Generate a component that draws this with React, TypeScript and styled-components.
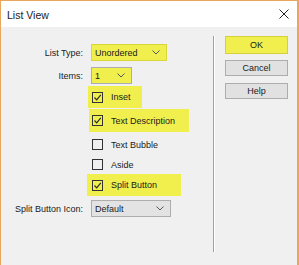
import React from 'react'
import styled, {createGlobalStyle} from 'styled-components'

const HIGHLIGHT = '#f1ef4d'

const GlobalStyle = createGlobalStyle`
  html, body {
    margin: 0;
    padding: 0;
    background: #f0f0f0;
  }
  body {
    font-family: "Liberation Sans", Arial, sans-serif;
  }
`

export default function App() {
  return (
    <>
      <GlobalStyle />
      <Window>
        <TitleBar>
          <Title>List View</Title>
          <CloseIcon />
        </TitleBar>
        <Body>
          <Form>
            <Row $mt={17}>
              <Label>List Type:</Label>
              <Select $w={76} $highlight>
                Unordered
                <Chevron />
              </Select>
            </Row>
            <Row $mt={6}>
              <Label>Items:</Label>
              <Select $w={41} $fill={HIGHLIGHT}>
                1
                <Chevron />
              </Select>
            </Row>
            <Row $mt={2}>
              <span />
              <CheckRow $h={22} $w={54} $highlight $shift={3}>
                <Box checked />
                Inset
              </CheckRow>
            </Row>
            <Row $mt={1}>
              <span />
              <CheckRow $h={23} $w={100} $highlight $shift={2}>
                <Box checked />
                Text Description
              </CheckRow>
            </Row>
            <Row $mt={3}>
              <span />
              <CheckRow $h={19}>
                <Box />
                Text Bubble
              </CheckRow>
            </Row>
            <Row $mt={1}>
              <span />
              <CheckRow $h={19}>
                <Box />
                Aside
              </CheckRow>
            </Row>
            <Row $mt={0}>
              <span />
              <CheckRow $h={22} $w={94} $highlight $shift={4}>
                <Box checked />
                Split Button
              </CheckRow>
            </Row>
            <Row $mt={4}>
              <Label>Split Button Icon:</Label>
              <Select $w={80}>
                Default
                <Chevron />
              </Select>
            </Row>
          </Form>
          <Separator />
          <Buttons>
            <Button $primary>OK</Button>
            <Button>Cancel</Button>
            <Button>Help</Button>
          </Buttons>
        </Body>
      </Window>
    </>
  )
}

function CloseIcon() {
  return (
    <CloseWrap>
      <svg width={10} height={10} viewBox="0 0 10 10">
        <path d="M0.5 0.5L9.5 9.5M9.5 0.5L0.5 9.5" stroke="#222" strokeWidth={1} />
      </svg>
    </CloseWrap>
  )
}

function Chevron() {
  return (
    <ChevronWrap>
      <svg width={8} height={5} viewBox="0 0 8 5">
        <path d="M0.5 0.5L4 4L7.5 0.5" stroke="#555" strokeWidth={1} fill="none" />
      </svg>
    </ChevronWrap>
  )
}

function Box({checked}: {checked?: boolean}) {
  return (
    <CheckBox>
      {checked && (
        <svg width={9} height={9} viewBox="0 0 9 9">
          <path d="M1.5 4.5L3.7 6.8L7.8 1.8" stroke="#222" strokeWidth={1.1} fill="none" />
        </svg>
      )}
    </CheckBox>
  )
}

const Window = styled.div`
  width: 299px;
  height: 265px;
  box-sizing: border-box;
  border-top: 1px solid #e9a65e;
  border-left: 1px solid #e9a65e;
  border-right: 2px solid #e9a65e;
  background: #f0f0f0;
  display: flex;
  flex-direction: column;
  overflow: hidden;
`

const TitleBar = styled.div`
  height: 26px;
  background: #ffffff;
  display: flex;
  align-items: center;
  justify-content: space-between;
  padding: 0 8px 0 6px;
  flex-shrink: 0;
`

const Title = styled.span`
  font-size: 10.5px;
  color: #1a1a1a;
  margin-top: 1px;
`

const CloseWrap = styled.span`
  display: flex;
  margin-top: -1px;
`

const Body = styled.div`
  display: flex;
  flex: 1;
`

const Form = styled.div`
  width: 212px;
  display: flex;
  flex-direction: column;
`

const Row = styled.div<{$mt: number}>`
  display: grid;
  grid-template-columns: 82px 1fr;
  column-gap: 8px;
  align-items: center;
  margin-top: ${p => p.$mt}px;
`

const Label = styled.span`
  font-size: 9px;
  color: #1a1a1a;
  text-align: right;
`

const Select = styled.div<{$w: number; $highlight?: boolean; $fill?: string}>`
  width: ${p => p.$w}px;
  height: 17px;
  box-sizing: border-box;
  border: 1px solid ${p => (p.$highlight ? '#d9d63a' : '#adadad')};
  background: ${p => (p.$highlight ? HIGHLIGHT : p.$fill || '#e3e3e3')};
  font-size: 9px;
  color: #1a1a1a;
  display: flex;
  align-items: center;
  justify-content: space-between;
  padding: 0 6px 0 3px;
`

const ChevronWrap = styled.span`
  display: flex;
`

const CheckRow = styled.div<{$h: number; $w?: number; $highlight?: boolean; $shift?: number}>`
  height: ${p => p.$h}px;
  width: ${p => (p.$w ? `${p.$w}px` : 'auto')};
  margin-left: ${p => -(p.$shift || 0)}px;
  padding-left: ${p => 1 + (p.$shift || 0)}px;
  box-sizing: border-box;
  background: ${p => (p.$highlight ? HIGHLIGHT : 'transparent')};
  display: flex;
  align-items: center;
  gap: 8px;
  font-size: 9px;
  color: #1a1a1a;
`

const CheckBox = styled.span`
  width: 11px;
  height: 11px;
  box-sizing: border-box;
  border: 1px solid #333;
  display: flex;
  align-items: center;
  justify-content: center;
  flex-shrink: 0;
`

const Separator = styled.div`
  width: 1px;
  height: 216px;
  margin-top: 9px;
  background: #a0a0a0;
  border-right: 1px solid #ffffff;
`

const Buttons = styled.div`
  display: flex;
  flex-direction: column;
  gap: 7px;
  padding-top: 9px;
  margin-left: 10px;
`

const Button = styled.div<{$primary?: boolean}>`
  width: 63px;
  height: ${p => (p.$primary ? 18 : 16)}px;
  box-sizing: border-box;
  border: 1px solid ${p => (p.$primary ? '#d4d23a' : '#adadad')};
  background: ${p => (p.$primary ? HIGHLIGHT : '#e1e1e1')};
  font-size: 9px;
  color: #1a1a1a;
  display: flex;
  align-items: center;
  justify-content: center;
  margin-bottom: ${p => (p.$primary ? -1 : 0)}px;
`
